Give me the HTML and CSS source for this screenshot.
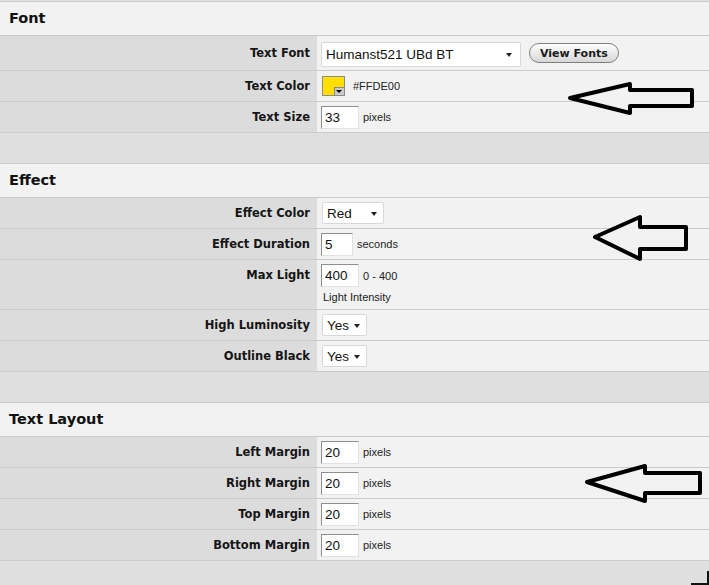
FILE: index.html
```html
<!DOCTYPE html>
<html lang="en">
<head>
    <meta charset="UTF-8">
    <title>Text Settings</title>
    <link rel="stylesheet" href="styles.css">
</head>
<body>
    <div class="page">
        <section class="panel">
            <h2 class="panel-title">Font</h2>
            <div class="row row-font">
                <div class="label">Text Font</div>
                <div class="field">
                    <span class="select select-font">Humanst521 UBd BT</span>
                    <button type="button" class="btn">View Fonts</button>
                </div>
            </div>
            <div class="row">
                <div class="label">Text Color</div>
                <div class="field">
                    <span class="swatch"></span>
                    <span class="note note-color">#FFDE00</span>
                </div>
            </div>
            <div class="row">
                <div class="label">Text Size</div>
                <div class="field">
                    <input type="text" class="num" value="33">
                    <span class="note">pixels</span>
                </div>
            </div>
        </section>
        <div class="spacer"></div>

        <section class="panel">
            <h2 class="panel-title">Effect</h2>
            <div class="row">
                <div class="label">Effect Color</div>
                <div class="field">
                    <span class="select select-color">Red</span>
                </div>
            </div>
            <div class="row">
                <div class="label">Effect Duration</div>
                <div class="field">
                    <input type="text" class="num num-short" value="5">
                    <span class="note">seconds</span>
                </div>
            </div>
            <div class="row row-tall">
                <div class="label">Max Light</div>
                <div class="field field-stack">
                    <div class="field-line">
                        <input type="text" class="num" value="400">
                        <span class="note">0 - 400</span>
                    </div>
                    <span class="hint">Light Intensity</span>
                </div>
            </div>
            <div class="row">
                <div class="label">High Luminosity</div>
                <div class="field">
                    <span class="select select-yes">Yes</span>
                </div>
            </div>
            <div class="row">
                <div class="label">Outline Black</div>
                <div class="field">
                    <span class="select select-yes">Yes</span>
                </div>
            </div>
        </section>
        <div class="spacer"></div>

        <section class="panel">
            <h2 class="panel-title">Text Layout</h2>
            <div class="row">
                <div class="label">Left Margin</div>
                <div class="field">
                    <input type="text" class="num" value="20">
                    <span class="note">pixels</span>
                </div>
            </div>
            <div class="row">
                <div class="label">Right Margin</div>
                <div class="field">
                    <input type="text" class="num" value="20">
                    <span class="note">pixels</span>
                </div>
            </div>
            <div class="row">
                <div class="label">Top Margin</div>
                <div class="field">
                    <input type="text" class="num" value="20">
                    <span class="note">pixels</span>
                </div>
            </div>
            <div class="row">
                <div class="label">Bottom Margin</div>
                <div class="field">
                    <input type="text" class="num" value="20">
                    <span class="note">pixels</span>
                </div>
            </div>
        </section>

        <!-- hand drawn arrows on top of the form -->
        <svg class="arrow arrow-font" width="140" height="44" viewBox="0 0 140 44">
            <polygon points="10,22 70,8 70,14 132,14 132,30 70,30 70,37"/>
        </svg>
        <svg class="arrow arrow-effect" width="110" height="60" viewBox="0 0 110 60">
            <polygon points="10,30 55,10 55,20 101,20 101,42 55,42 55,52"/>
        </svg>
        <svg class="arrow arrow-layout" width="132" height="56" viewBox="0 0 132 56">
            <polygon points="10,26 68,10 68,17 123,17 123,37 68,37 68,45"/>
        </svg>
        <span class="grip"></span>
    </div>
</body>
</html>
```

FILE: styles.css
```css
html, body {
    margin: 0;
    padding: 0;
    background: #dfdfdf;
}
.page {
    position: relative;
    width: 709px;
    height: 585px;
    overflow: hidden;
    padding-top: 1px;
    box-sizing: border-box;
    background: #dfdfdf;
    font-family: "Liberation Sans", Arial, sans-serif;
    color: #1a1a1a;
}
.panel {
    border-top: 1px solid #cacaca;
}
.spacer + .panel {
    border-top: none;
}
.spacer {
    height: 30px;
    border-bottom: 1px solid #cacaca;
    background: #dfdfdf;
}
.panel-title {
    margin: 0;
    height: 33px;
    line-height: 33px;
    padding-left: 9px;
    background: #f2f2f2;
    border-bottom: 1px solid #cacaca;
    font-family: "DejaVu Sans", Verdana, sans-serif;
    font-size: 14.5px;
    font-weight: bold;
    color: #111;
}
.row {
    display: grid;
    grid-template-columns: 317px 1fr;
    height: 30px;
    border-bottom: 1px solid #cacaca;
}
.row-font {
    height: 34px;
}
.row-tall {
    height: 49px;
}
.label {
    background: #dcdcdc;
    padding-right: 7px;
    line-height: 30px;
    font-family: "DejaVu Sans", Verdana, sans-serif;
    font-size: 11.5px;
    font-weight: bold;
    color: #151515;
    display: flex;
    align-items: center;
    justify-content: flex-end;
}
.row-tall .label {
    align-items: flex-start;
}
.field {
    background: #f2f2f2;
    padding-left: 4px;
    display: flex;
    align-items: center;
}
.field-stack {
    flex-direction: column;
    align-items: flex-start;
    justify-content: flex-start;
    padding-top: 4px;
}
.field-line {
    display: flex;
    align-items: center;
}
.hint {
    margin-top: 4px;
    margin-left: 2px;
    font-size: 11px;
    color: #222;
}
.note {
    margin-left: 4px;
    font-size: 11px;
    color: #222;
}
.note-color {
    margin-left: 8px;
}
.num {
    width: 38px;
    height: 23px;
    box-sizing: border-box;
    margin: 0;
    padding: 0 0 0 3px;
    border: 1px solid #e2e2e2;
    border-top-color: #8e8e8e;
    border-left-color: #8e8e8e;
    background: #fff;
    font-family: "Liberation Sans", Arial, sans-serif;
    font-size: 13.5px;
    color: #111;
}
.num-short {
    width: 32px;
}
.select {
    position: relative;
    display: inline-flex;
    align-items: center;
    box-sizing: border-box;
    padding-left: 4px;
    background: #fff;
    border: 1px solid #d8d8d8;
    border-radius: 2px;
    font-size: 13.5px;
    color: #111;
}
.select:after {
    content: "";
    position: absolute;
    right: 6px;
    top: 50%;
    margin-top: -1px;
    border-left: 3.5px solid transparent;
    border-right: 3.5px solid transparent;
    border-top: 4px solid #222;
}
.select-font {
    width: 200px;
    height: 25px;
    margin-top: 2px;
}
.select-font:after {
    right: 8px;
}
.select-color {
    width: 62px;
    height: 22px;
    margin-left: 1px;
}
.select-yes {
    width: 45px;
    height: 22px;
    margin-left: 1px;
}
.btn {
    margin-left: 8px;
    height: 20px;
    padding: 0 10px;
    border: 1px solid #7f7f7f;
    border-radius: 10px;
    background: linear-gradient(#ffffff, #d6d6d6);
    font-family: "DejaVu Sans", Verdana, sans-serif;
    font-size: 11px;
    font-weight: bold;
    color: #1a1a1a;
}
.swatch {
    position: relative;
    width: 23px;
    height: 20px;
    margin-left: 1px;
    box-sizing: border-box;
    border: 1px solid #8a8a8a;
    background: #ffde00;
}
.swatch:after {
    content: "";
    position: absolute;
    right: 0;
    bottom: 0;
    width: 10px;
    height: 8px;
    box-sizing: border-box;
    background: #c9c9c9;
    border-left: 1px solid #8a8a8a;
    border-top: 1px solid #8a8a8a;
}
.swatch:before {
    content: "";
    position: absolute;
    right: 2px;
    bottom: 2px;
    z-index: 1;
    border-left: 3px solid transparent;
    border-right: 3px solid transparent;
    border-top: 3px solid #000;
}
.arrow {
    position: absolute;
}
.arrow polygon {
    fill: #f2f2f2;
    stroke: #000;
    stroke-width: 4;
    stroke-linejoin: round;
}
.arrow-font {
    left: 560px;
    top: 76px;
}
.arrow-effect {
    left: 585px;
    top: 207px;
}
.arrow-layout {
    left: 577px;
    top: 456px;
}
.grip {
    position: absolute;
    right: 0;
    bottom: 0;
    width: 16px;
    height: 12px;
    border-right: 2px solid #111;
    border-bottom: 2px solid #111;
}
```
